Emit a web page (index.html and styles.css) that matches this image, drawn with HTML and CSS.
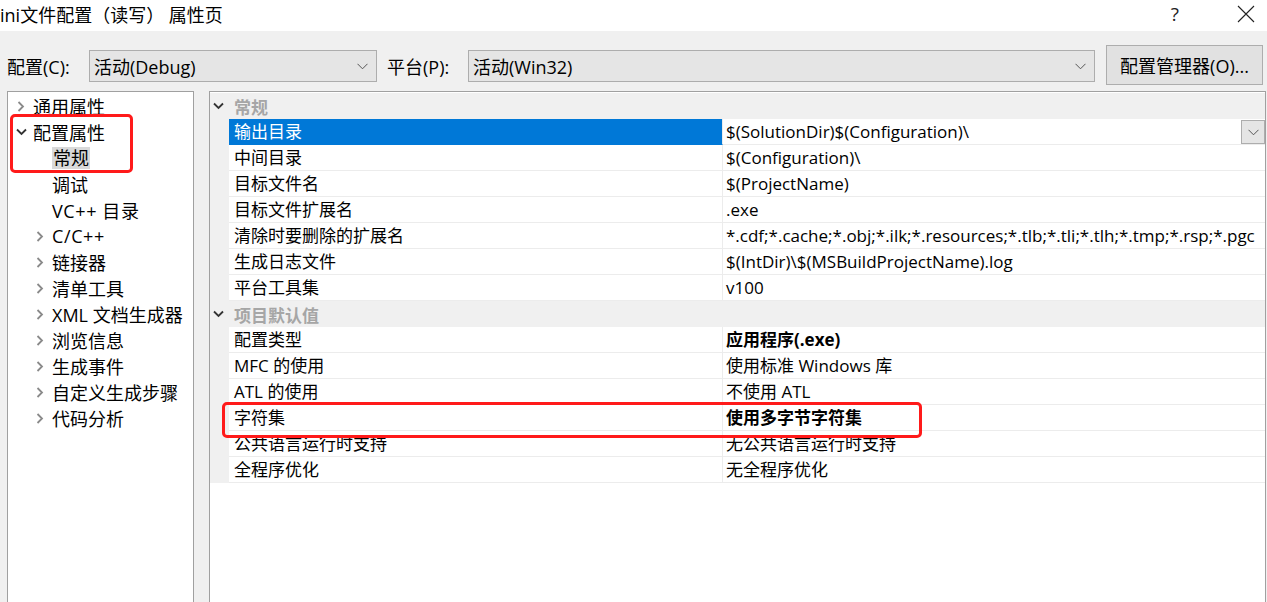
FILE: index.html
```html
<!DOCTYPE html>
<html lang="zh-CN">
<head>
<meta charset="utf-8">
<link rel="stylesheet" href="styles.css">
</head>
<body>
<div class="titlebar">
  <div class="title">ini文件配置（读写） 属性页</div>
  <div class="title-btns">
    <span class="help">?</span>
    <svg class="close" width="18" height="18" viewBox="0 0 18 18"><path d="M1 1 L17 17 M17 1 L1 17" stroke="#222" stroke-width="1.1" fill="none"/></svg>
  </div>
</div>
<div class="toolbar">
  <label class="lbl lbl-config">配置(C):</label>
  <div class="select sel-config"><span>活动(Debug)</span><svg class="chev" width="11" height="7" viewBox="0 0 11 7"><path d="M0.5 0.8 L5.5 5.8 L10.5 0.8" stroke="#555" stroke-width="1" fill="none"/></svg></div>
  <label class="lbl lbl-platform">平台(P):</label>
  <div class="select sel-platform"><span>活动(Win32)</span><svg class="chev" width="11" height="7" viewBox="0 0 11 7"><path d="M0.5 0.8 L5.5 5.8 L10.5 0.8" stroke="#555" stroke-width="1" fill="none"/></svg></div>
  <div class="button">配置管理器(O)...</div>
</div>
<div class="main">
  <div class="tree">
    <div class="node l0"><span class="abox"><svg width="8" height="11" viewBox="0 0 8 11"><path d="M1.5 1 L6 5.5 L1.5 10" stroke="#8a8a8a" stroke-width="1.8" fill="none"/></svg></span><span>通用属性</span></div>
    <div class="node l0"><span class="abox"><svg width="11" height="8" viewBox="0 0 11 8"><path d="M1 1.5 L5.5 6 L10 1.5" stroke="#333" stroke-width="1.8" fill="none"/></svg></span><span>配置属性</span></div>
    <div class="node noarr"><span class="sel">常规</span></div>
    <div class="node noarr"><span>调试</span></div>
    <div class="node noarr"><span class="wide">VC++ 目录</span></div>
    <div class="node l1"><span class="abox"><svg width="8" height="11" viewBox="0 0 8 11"><path d="M1.5 1 L6 5.5 L1.5 10" stroke="#8a8a8a" stroke-width="1.8" fill="none"/></svg></span><span class="wide">C/C++</span></div>
    <div class="node l1"><span class="abox"><svg width="8" height="11" viewBox="0 0 8 11"><path d="M1.5 1 L6 5.5 L1.5 10" stroke="#8a8a8a" stroke-width="1.8" fill="none"/></svg></span><span>链接器</span></div>
    <div class="node l1"><span class="abox"><svg width="8" height="11" viewBox="0 0 8 11"><path d="M1.5 1 L6 5.5 L1.5 10" stroke="#8a8a8a" stroke-width="1.8" fill="none"/></svg></span><span>清单工具</span></div>
    <div class="node l1"><span class="abox"><svg width="8" height="11" viewBox="0 0 8 11"><path d="M1.5 1 L6 5.5 L1.5 10" stroke="#8a8a8a" stroke-width="1.8" fill="none"/></svg></span><span>XML 文档生成器</span></div>
    <div class="node l1"><span class="abox"><svg width="8" height="11" viewBox="0 0 8 11"><path d="M1.5 1 L6 5.5 L1.5 10" stroke="#8a8a8a" stroke-width="1.8" fill="none"/></svg></span><span>浏览信息</span></div>
    <div class="node l1"><span class="abox"><svg width="8" height="11" viewBox="0 0 8 11"><path d="M1.5 1 L6 5.5 L1.5 10" stroke="#8a8a8a" stroke-width="1.8" fill="none"/></svg></span><span>生成事件</span></div>
    <div class="node l1"><span class="abox"><svg width="8" height="11" viewBox="0 0 8 11"><path d="M1.5 1 L6 5.5 L1.5 10" stroke="#8a8a8a" stroke-width="1.8" fill="none"/></svg></span><span>自定义生成步骤</span></div>
    <div class="node l1"><span class="abox"><svg width="8" height="11" viewBox="0 0 8 11"><path d="M1.5 1 L6 5.5 L1.5 10" stroke="#8a8a8a" stroke-width="1.8" fill="none"/></svg></span><span>代码分析</span></div>
    <div class="mark mark-tree"></div>
  </div>
  <div class="grid">
    <div class="cat"><svg class="carr" width="11" height="8" viewBox="0 0 11 8"><path d="M1 1.5 L5.5 6 L10 1.5" stroke="#333" stroke-width="1.8" fill="none"/></svg><span>常规</span></div>
    <div class="row active"><div class="name">输出目录</div><div class="val">$(SolutionDir)$(Configuration)\<span class="ddbtn"><svg width="11" height="7" viewBox="0 0 11 7"><path d="M0.5 0.8 L5.5 5.8 L10.5 0.8" stroke="#555" stroke-width="1" fill="none"/></svg></span></div></div>
    <div class="row"><div class="name">中间目录</div><div class="val">$(Configuration)\</div></div>
    <div class="row"><div class="name">目标文件名</div><div class="val">$(ProjectName)</div></div>
    <div class="row"><div class="name">目标文件扩展名</div><div class="val">.exe</div></div>
    <div class="row"><div class="name">清除时要删除的扩展名</div><div class="val">*.cdf;*.cache;*.obj;*.ilk;*.resources;*.tlb;*.tli;*.tlh;*.tmp;*.rsp;*.pgc</div></div>
    <div class="row"><div class="name">生成日志文件</div><div class="val">$(IntDir)\$(MSBuildProjectName).log</div></div>
    <div class="row"><div class="name">平台工具集</div><div class="val">v100</div></div>
    <div class="cat"><svg class="carr" width="11" height="8" viewBox="0 0 11 8"><path d="M1 1.5 L5.5 6 L10 1.5" stroke="#333" stroke-width="1.8" fill="none"/></svg><span>项目默认值</span></div>
    <div class="row"><div class="name">配置类型</div><div class="val b">应用程序(.exe)</div></div>
    <div class="row"><div class="name">MFC 的使用</div><div class="val">使用标准 Windows 库</div></div>
    <div class="row"><div class="name">ATL 的使用</div><div class="val">不使用 ATL</div></div>
    <div class="row"><div class="name">字符集</div><div class="val b">使用多字节字符集</div></div>
    <div class="row"><div class="name">公共语言运行时支持</div><div class="val">无公共语言运行时支持</div></div>
    <div class="row"><div class="name">全程序优化</div><div class="val">无全程序优化</div></div>
    <div class="mark mark-grid"></div>
  </div>
</div>
</body>
</html>
```
FILE: styles.css
```css
* { box-sizing: border-box; }
html, body { margin: 0; padding: 0; }
body {
  width: 1267px;
  height: 602px;
  overflow: hidden;
  background: #f0f0f0;
  font-family: "Open Sans", "Noto Sans CJK SC", sans-serif;
  font-size: 17px;
  color: #000;
}
.titlebar {
  height: 31px;
  background: #fff;
  display: flex;
  align-items: center;
  justify-content: space-between;
}
.title {
  font-size: 18px;
  margin-top: -3px;
}
.title-btns {
  display: flex;
  align-items: center;
  margin-top: -4px;
}
.help {
  font-size: 19px;
  color: #222;
  margin-right: 58px;
}
.close { margin-right: 12px; }

.toolbar {
  height: 60px;
  display: flex;
  align-items: center;
  padding-left: 7px;
  padding-top: 10px;
}
.lbl { font-size: 18px; }
.lbl-config { width: 82px; }
.lbl-platform { width: 81px; }
.select {
  height: 32px;
  background: #e5e5e5;
  border: 1px solid #adadad;
  display: flex;
  align-items: center;
  justify-content: space-between;
  padding: 0 8px 0 4px;
  font-size: 18px;
}
.sel-config { width: 288px; margin-right: 10px; }
.sel-platform { width: 627px; margin-right: 11px; }
.button {
  width: 157px;
  height: 40px;
  margin-top: -2px;
  background: #e1e1e1;
  border: 1px solid #adadad;
  display: flex;
  align-items: center;
  justify-content: center;
  font-size: 18px;
}

.main {
  display: flex;
  gap: 15px;
  padding-left: 7px;
  height: 520px;
}
.tree {
  position: relative;
  width: 187px;
  background: #fff;
  border: 1px solid #a0a0a0;
  border-bottom: none;
  padding-top: 1px;
  font-size: 18px;
}
.node {
  height: 26px;
  display: flex;
  align-items: center;
  white-space: nowrap;
}
.node.l0 { padding-left: 7px; }
.node.l1 { padding-left: 26px; }
.node.noarr { padding-left: 44px; }
.abox {
  width: 12px;
  margin-right: 6px;
  display: flex;
  align-items: center;
  justify-content: center;
  flex: none;
}
.wide { letter-spacing: 0.6px; }
.sel { background: #d9d9d9; padding: 0 1px; line-height: 22px; }

.grid {
  position: relative;
  width: 1057px;
  background: #fff;
  border: 1px solid #a0a0a0;
  border-bottom: none;
  padding-top: 1px;
  font-size: 17px;
}
.cat {
  height: 26px;
  background: #f0f0f0;
  display: flex;
  align-items: center;
  padding-left: 3px;
  font-weight: bold;
  color: #a6a6a6;
}
.carr { margin-right: 10px; }
.row {
  height: 26px;
  display: flex;
  background: #f0f0f0;
  padding-left: 19px;
}
.row .name, .row .val {
  height: 26px;
  line-height: 25px;
  background: #fff;
  border-bottom: 1px solid #ececec;
  white-space: nowrap;
  overflow: hidden;
}
.row .name {
  width: 494px;
  padding-left: 5px;
  border-right: 1px solid #ececec;
}
.row .val {
  flex: 1;
  padding-left: 3px;
  position: relative;
}
.row.active .name { background: #0078d7; color: #fff; border-bottom-color: #0078d7; }
.val.b { font-weight: bold; }
.ddbtn {
  position: absolute;
  right: 0;
  top: 1px;
  width: 24px;
  height: 24px;
  background: #e5e5e5;
  border: 1px solid #adadad;
  display: flex;
  align-items: center;
  justify-content: center;
}

.mark {
  position: absolute;
  border: 3.5px solid #ff1a1a;
  border-radius: 5px;
}
.mark-tree { left: 2px; top: 22px; width: 123px; height: 59px; }
.mark-grid { left: 12px; top: 310px; width: 700px; height: 36px; }
```
